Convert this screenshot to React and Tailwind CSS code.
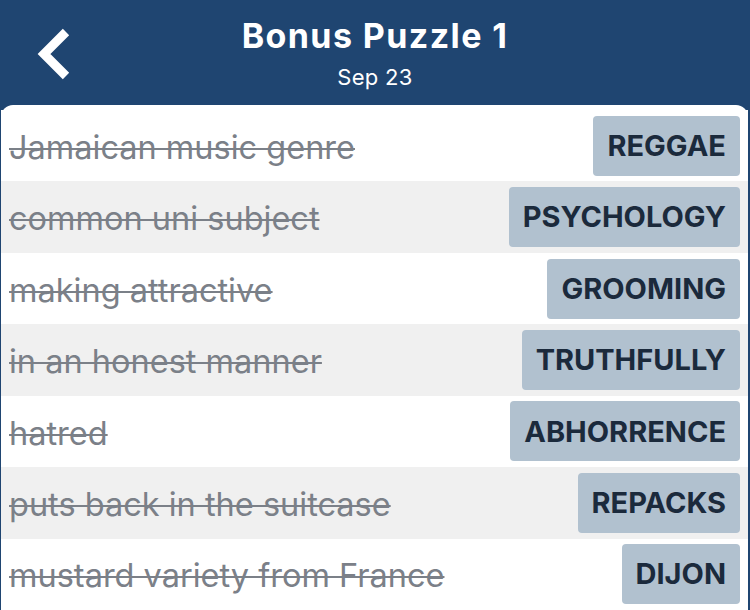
import React from "react";

const rows = [
  ["Jamaican music genre", "REGGAE"],
  ["common uni subject", "PSYCHOLOGY"],
  ["making attractive", "GROOMING"],
  ["in an honest manner", "TRUTHFULLY"],
  ["hatred", "ABHORRENCE"],
  ["puts back in the suitcase", "REPACKS"],
  ["mustard variety from France", "DIJON"],
];

export default function App() {
  return (
    <div className="w-[750px] h-[610px] overflow-hidden bg-[#1f4571] flex flex-col" style={{ fontFamily: "Inter, 'Noto Sans', sans-serif" }}>
      <div className="h-[105px] shrink-0 relative flex flex-col items-center text-white">
        <svg className="absolute left-[34px] top-[27px]" width="40" height="54" viewBox="0 0 40 54">
          <path d="M32 5 L10 27 L32 49" fill="none" stroke="white" strokeWidth="9" strokeLinecap="butt" strokeLinejoin="miter" />
        </svg>
        <div className="mt-[14px] text-[34px] font-bold leading-[44px] tracking-[1.4px]">Bonus Puzzle 1</div>
        <div className="text-[22px] leading-[28px] mt-[5px] tracking-[0.3px]">Sep 23</div>
      </div>
      <div className="flex-1 bg-white rounded-t-[12px] ml-[1px] mr-[2px] pt-[5px] flex flex-col">
        {rows.map(([clue, ans], i) => (
          <div key={i} className={`h-[71.43px] shrink-0 flex items-center justify-between pl-[8px] pr-[8px] ${i % 2 === 1 ? "bg-[#f0f0f0]" : "bg-white"}`}>
            <span className="pt-[5px] text-[32.5px] text-[#7b8088] line-through decoration-[2px] decoration-[#7b8088]">{clue}</span>
            <span className="h-[60px] flex items-center px-[14px] rounded-[4px] bg-[#b1c1cf] text-[#1b2a3c] font-bold text-[29px]">{ans}</span>
          </div>
        ))}
      </div>
    </div>
  );
}
